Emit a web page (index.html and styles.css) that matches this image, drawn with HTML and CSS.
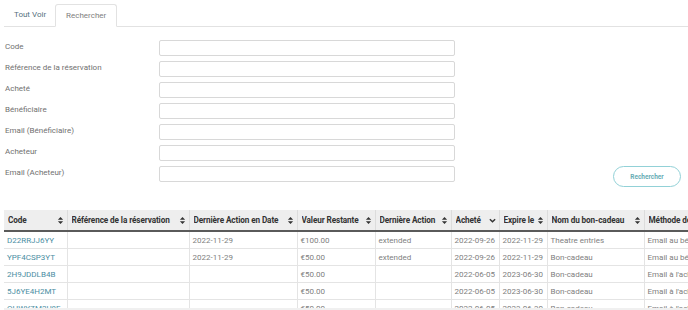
FILE: index.html
```html
<!DOCTYPE html>
<html lang="fr">
<head>
  <meta charset="UTF-8" />
  <title>Bons-cadeaux</title>
  <link rel="stylesheet" href="styles.css">
</head>
<body>
  <div class="page">
    <div class="tabs">
      <div class="tab">Tout Voir</div>
      <div class="tab active">Rechercher</div>
    </div>

    <form class="search-form">
      <div class="fields">
        <label>Code</label><input type="text" />
        <label>Référence de la réservation</label><input type="text" />
        <label>Acheté</label><input type="text" />
        <label>Bénéficiaire</label><input type="text" />
        <label>Email (Bénéficiaire)</label><input type="text" />
        <label>Acheteur</label><input type="text" />
        <label>Email (Acheteur)</label><input type="text" />
      </div>
      <div class="actions">
        <button type="button" class="btn-search">Rechercher</button>
      </div>
    </form>

    <div class="table-wrap">
      <table class="vouchers">
        <colgroup>
          <col style="width:63px"><col style="width:122px"><col style="width:108px">
          <col style="width:78px"><col style="width:76px"><col style="width:48px">
          <col style="width:48px"><col style="width:97px"><col style="width:120px">
        </colgroup>
        <thead>
          <tr>
            <th><div class="th"><span>Code</span><svg class="sort" viewBox="0 0 8 10"><path d="M4 1 7 4.2H1z M4 9 7 5.8H1z"/></svg></div></th>
            <th><div class="th"><span>Référence de la réservation</span><svg class="sort" viewBox="0 0 8 10"><path d="M4 1 7 4.2H1z M4 9 7 5.8H1z"/></svg></div></th>
            <th><div class="th"><span>Dernière Action en Date</span><svg class="sort" viewBox="0 0 8 10"><path d="M4 1 7 4.2H1z M4 9 7 5.8H1z"/></svg></div></th>
            <th><div class="th"><span>Valeur Restante</span><svg class="sort" viewBox="0 0 8 10"><path d="M4 1 7 4.2H1z M4 9 7 5.8H1z"/></svg></div></th>
            <th><div class="th"><span>Dernière Action</span><svg class="sort" viewBox="0 0 8 10"><path d="M4 1 7 4.2H1z M4 9 7 5.8H1z"/></svg></div></th>
            <th><div class="th"><span>Acheté</span><svg class="sort down" viewBox="0 0 8 10"><path d="M1 3.5 4 6.5 7 3.5"/></svg></div></th>
            <th><div class="th"><span>Expire le</span><svg class="sort" viewBox="0 0 8 10"><path d="M4 1 7 4.2H1z M4 9 7 5.8H1z"/></svg></div></th>
            <th><div class="th"><span>Nom du bon-cadeau</span><svg class="sort" viewBox="0 0 8 10"><path d="M4 1 7 4.2H1z M4 9 7 5.8H1z"/></svg></div></th>
            <th><div class="th"><span>Méthode de livraison</span></div></th>
          </tr>
        </thead>
        <tbody>
          <tr>
            <td class="code">D22RRJJ6YY</td><td></td><td>2022-11-29</td><td>€100.00</td><td>extended</td>
            <td>2022-09-26</td><td>2022-11-29</td><td>Theatre entries</td><td>Email au bénéficiaire</td>
          </tr>
          <tr>
            <td class="code">YPF4CSP3YT</td><td></td><td>2022-11-29</td><td>€50.00</td><td>extended</td>
            <td>2022-09-26</td><td>2022-11-29</td><td>Bon-cadeau</td><td>Email au bénéficiaire</td>
          </tr>
          <tr>
            <td class="code">2H9JDDLB4B</td><td></td><td></td><td>€50.00</td><td></td>
            <td>2022-06-05</td><td>2023-06-30</td><td>Bon-cadeau</td><td>Email à l'acheteur</td>
          </tr>
          <tr>
            <td class="code">5J6YE4H2MT</td><td></td><td></td><td>€50.00</td><td></td>
            <td>2022-06-05</td><td>2023-06-30</td><td>Bon-cadeau</td><td>Email à l'acheteur</td>
          </tr>
          <tr>
            <td class="code">OHWYZM2U8E</td><td></td><td></td><td>€50.00</td><td></td>
            <td>2022-06-05</td><td>2023-06-30</td><td>Bon-cadeau</td><td>Email à l'acheteur</td>
          </tr>
        </tbody>
      </table>
    </div>
  </div>
</body>
</html>
```

FILE: styles.css
```css
body {
  margin: 0;
  background: #fff;
  color: #777;
  font-family: Roboto, "Liberation Sans", sans-serif;
  font-size: 8px;
  overflow: hidden;
}

.page {
  padding: 4px 0 0 4px;
}

/* tabs */
.tabs {
  display: flex;
  border-bottom: 1px solid #e2e2e2;
  height: 22px;
}

.tab {
  padding: 0 9px 0 10px;
  line-height: 22px;
  font-size: 8px;
  color: #56717e;
}

.tab.active {
  color: #808080;
  background: #fff;
  border: 1px solid #e2e2e2;
  border-bottom-color: #fff;
  border-radius: 3px 3px 0 0;
  line-height: 21px;
  margin-bottom: -1px;
  padding: 0 10px;
}

/* search form */
.search-form {
  display: flex;
  align-items: flex-end;
  margin-top: 13px;
}

.fields {
  display: grid;
  grid-template-columns: 155px 296px;
  row-gap: 5px;
  margin-bottom: 5px;
}

.fields label {
  padding: 2px 0 0 1px;
  font-size: 8px;
  color: #707070;
}

.fields input {
  height: 16px;
  box-sizing: border-box;
  border: 1px solid #d8d8d8;
  border-radius: 2px;
  margin: 0;
  padding: 0 4px;
  font: inherit;
}

.actions {
  margin-left: auto;
  padding-right: 7px;
}

.btn-search {
  width: 68px;
  height: 21px;
  border: 1px solid #92d1d7;
  border-radius: 11px;
  background: #fff;
  color: #6aaeb6;
  font-family: Roboto, "Liberation Sans", sans-serif;
  font-weight: 700;
  font-size: 6.5px;
  padding: 0;
}

/* results table */
.table-wrap {
  margin-top: 23px;
  height: 98px;
  overflow: hidden;
  border-bottom: 3px solid #f0f0f0;
}

.vouchers {
  border-collapse: collapse;
  table-layout: fixed;
  width: 760px;
}

.vouchers th {
  background: #eeeeee;
  border-left: 1px solid #dcdcdc;
  border-bottom: 2px solid #5a5a5a;
  height: 20px;
  padding: 0;
  color: #333;
  font-size: 8.2px;
  font-weight: 700;
  letter-spacing: -0.1px;
  text-align: left;
  white-space: nowrap;
  overflow: hidden;
}

.vouchers th:first-child {
  border-left: 0;
}

.th {
  display: flex;
  align-items: center;
  gap: 2px;
  padding: 0 3px 0 4px;
}

.th span {
  flex: 1 1 auto;
  overflow: hidden;
}

.sort {
  width: 7px;
  height: 9px;
  flex: 0 0 auto;
  fill: #333;
}

.sort.down {
  fill: none;
  stroke: #333;
  stroke-width: 1.6;
}

.vouchers td {
  height: 16px;
  padding: 0 3px;
  border: 1px solid #e4e4e4;
  border-top: 0;
  color: #808080;
  font-size: 8px;
  white-space: nowrap;
  overflow: hidden;
}

.vouchers td:first-child {
  border-left: 0;
}

.vouchers td.code {
  color: #4b8ea3;
}
```
